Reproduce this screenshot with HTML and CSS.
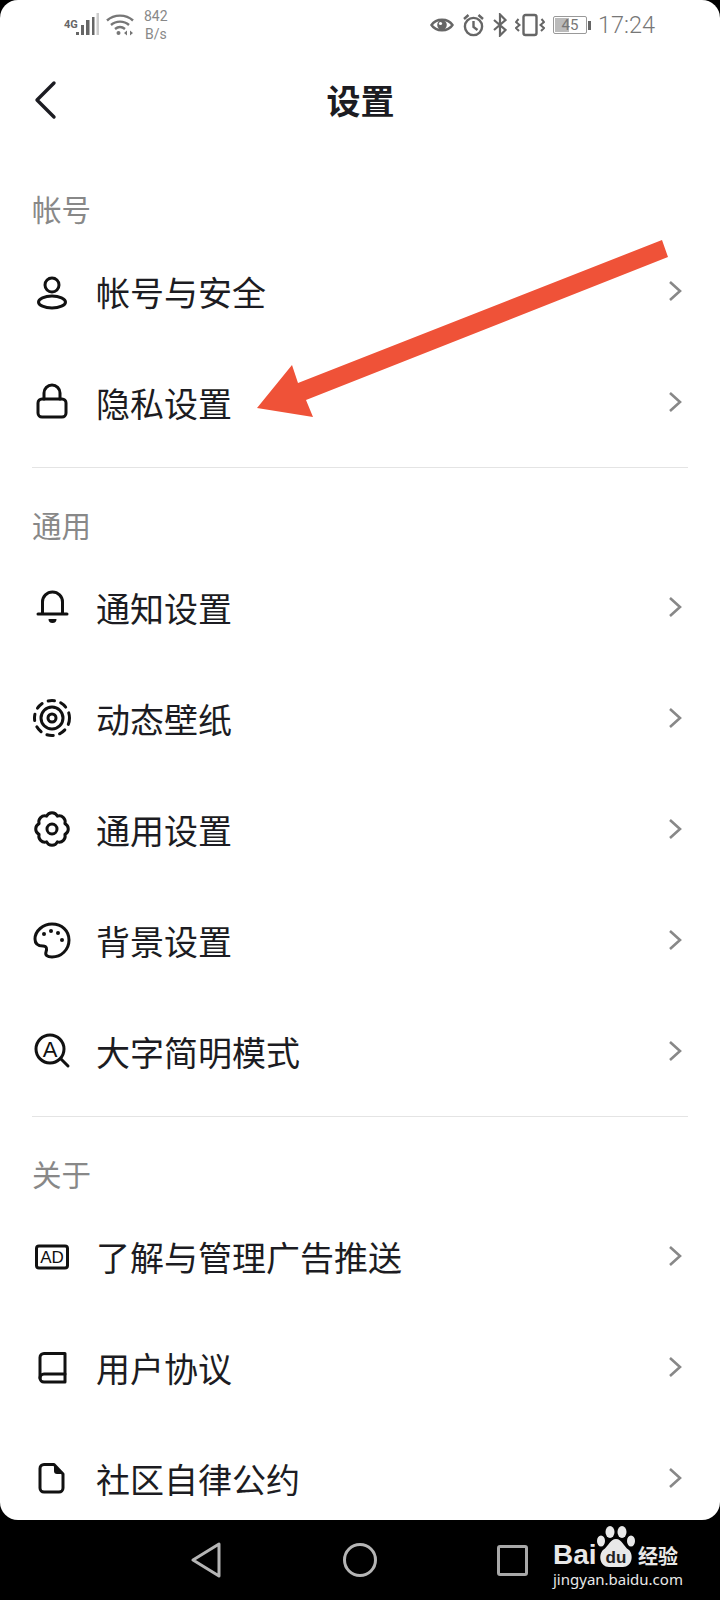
FILE: index.html
```html
<!DOCTYPE html>
<html lang="zh-CN">
<head>
  <meta charset="UTF-8">
  <meta name="viewport" content="width=device-width, initial-scale=1.0">
  <title>设置</title>
  <link rel="stylesheet" href="styles.css">
</head>
<body>
  <div class="screen">
    <div class="status-bar">
      <div class="status-group">
        <span class="net-type">4G</span>
        <svg class="signal" width="24" height="24" viewBox="0 0 24 24">
          <rect x="0" y="19" width="3" height="3"/>
          <rect x="5" y="12" width="3" height="10"/>
          <rect x="10" y="7" width="3.5" height="15"/>
          <rect x="16" y="4" width="2.5" height="18"/>
          <rect x="20.5" y="0" width="2.5" height="22" fill="#ccc"/>
        </svg>
        <svg class="wifi" width="28" height="24" viewBox="0 0 28 24" fill="none" stroke="#777" stroke-width="2.4">
          <path d="M1 7.5C8 1 20 1 27 7.5"/>
          <path d="M5 12C10 7.5 18 7.5 23 12"/>
          <path d="M9 16c3-2.4 7-2.4 10 0"/>
          <circle cx="12.5" cy="20" r="2" fill="#777" stroke="none"/>
          <path d="M21 17.5l-3 2.5 3 2.5zM24 17.5l3 2.5-3 2.5z" fill="#777" stroke="none"/>
        </svg>
        <div class="net-speed"><span>842</span><span>B/s</span></div>
      </div>
      <div class="status-group status-right">
        <svg width="24" height="20" viewBox="0 0 24 20" fill="none" stroke="#666" stroke-width="2.4">
          <path d="M1.5 10C6 3 18 3 22.5 10C18 17 6 17 1.5 10Z"/>
          <circle cx="12" cy="10" r="4.8" fill="#666" stroke="none"/>
          <circle cx="10.5" cy="8.5" r="1.6" fill="#fff" stroke="none"/>
        </svg>
        <svg width="23" height="24" viewBox="0 0 22 24" fill="none" stroke="#666" stroke-width="2.4">
          <circle cx="11" cy="13.5" r="8.6"/>
          <path d="M11 8v6l4 3M1.5 6L6 2M20.5 6L16 2"/>
        </svg>
        <svg width="14" height="24" viewBox="0 0 14 24" fill="none" stroke="#666" stroke-width="2.2">
          <path d="M1 7L12.5 17L7 22.5V1.5L12.5 7L1 17"/>
        </svg>
        <svg width="30" height="24" viewBox="0 0 30 24" fill="none" stroke="#666" stroke-width="2">
          <rect x="8.5" y="2" width="13" height="20" rx="2" stroke-width="2.4"/>
          <path d="M3.5 6L1 9l3.5 3L1 15l3 3M26.5 6L29 9l-3.5 3L29 15l-3 3"/>
        </svg>
        <div class="battery">
          <div class="battery-body"><div class="battery-fill"></div><span>45</span></div>
          <div class="battery-cap"></div>
        </div>
        <span class="clock">17:24</span>
      </div>
    </div>

    <div class="header">
      <svg class="back" width="24" height="40" viewBox="0 0 24 40" fill="none" stroke="#1c1c22" stroke-width="3.4" stroke-linecap="round" stroke-linejoin="round">
        <path d="M20 3L3 20L20 37"/>
      </svg>
      <h1>设置</h1>
    </div>

    <div class="section">
      <div class="section-title">帐号</div>
      <div class="row">
        <svg class="icon" viewBox="0 0 44 44"><circle cx="22" cy="14" r="7"/><ellipse cx="22" cy="31" rx="13.5" ry="6"/></svg>
        <span class="label">帐号与安全</span>
        <svg class="chevron" viewBox="0 0 14 22"><path d="M2 2L12 11L2 20"/></svg>
      </div>
      <div class="row">
        <svg class="icon" viewBox="0 0 44 44"><rect x="8" y="17" width="28" height="18" rx="4"/><path d="M14 17v-6a8 8 0 0 1 16 0v6"/></svg>
        <span class="label">隐私设置</span>
        <svg class="chevron" viewBox="0 0 14 22"><path d="M2 2L12 11L2 20"/></svg>
      </div>
    </div>
    <div class="divider"></div>

    <div class="section">
      <div class="section-title">通用</div>
      <div class="row">
        <svg class="icon" viewBox="0 0 44 44"><path d="M8 27h29M12.5 27V15a10 10 0 0 1 20 0v12"/><path class="solid" d="M18.5 32h8a4 4 0 0 1-8 0z"/></svg>
        <span class="label">通知设置</span>
        <svg class="chevron" viewBox="0 0 14 22"><path d="M2 2L12 11L2 20"/></svg>
      </div>
      <div class="row">
        <svg class="icon" viewBox="0 0 44 44"><circle class="dashed" cx="22" cy="20" r="17.5"/><circle cx="22" cy="20" r="11"/><circle cx="22" cy="20" r="4"/></svg>
        <span class="label">动态壁纸</span>
        <svg class="chevron" viewBox="0 0 14 22"><path d="M2 2L12 11L2 20"/></svg>
      </div>
      <div class="row">
        <svg class="icon" viewBox="0 0 44 44"><path d="M34.9 14.6A6 6 0 0 1 34.9 25.4A6 6 0 0 1 27.4 32.9A6 6 0 0 1 16.6 32.9A6 6 0 0 1 9.1 25.4A6 6 0 0 1 9.1 14.6A6 6 0 0 1 16.6 7.1A6 6 0 0 1 27.4 7.1A6 6 0 0 1 34.9 14.6Z"/><circle cx="22" cy="20" r="5"/></svg>
        <span class="label">通用设置</span>
        <svg class="chevron" viewBox="0 0 14 22"><path d="M2 2L12 11L2 20"/></svg>
      </div>
      <div class="row">
        <svg class="icon" viewBox="0 0 44 44"><path d="M5 19C5 11 13 4 22 4C32 4 39 11 39 20C39 30 31 37 22 37C17 37 15 35 16 32C17 29 17 26 13 26C8 26 5 24 5 19Z"/><circle class="solid" cx="14" cy="14" r="2"/><circle class="solid" cx="21" cy="11" r="2"/><circle class="solid" cx="28" cy="13" r="2"/><circle class="solid" cx="32" cy="20" r="2"/></svg>
        <span class="label">背景设置</span>
        <svg class="chevron" viewBox="0 0 14 22"><path d="M2 2L12 11L2 20"/></svg>
      </div>
      <div class="row">
        <svg class="icon" viewBox="0 0 44 44"><circle cx="20" cy="18" r="14"/><path d="M31 28l7 7"/><text class="icon-text" x="20" y="26" font-size="22">A</text></svg>
        <span class="label">大字简明模式</span>
        <svg class="chevron" viewBox="0 0 14 22"><path d="M2 2L12 11L2 20"/></svg>
      </div>
    </div>
    <div class="divider"></div>

    <div class="section">
      <div class="section-title">关于</div>
      <div class="row">
        <svg class="icon" viewBox="0 0 44 44"><rect x="6.5" y="10" width="31" height="22" rx="2.5"/><text class="icon-text" x="22" y="27" font-size="17">AD</text></svg>
        <span class="label">了解与管理广告推送</span>
        <svg class="chevron" viewBox="0 0 14 22"><path d="M2 2L12 11L2 20"/></svg>
      </div>
      <div class="row">
        <svg class="icon" viewBox="0 0 44 44"><path d="M14 6.5H35V35H14a4 4 0 0 1-4-4V10.5a4 4 0 0 1 4-4z"/><path d="M10 31a4 4 0 0 1 4-4H35"/></svg>
        <span class="label">用户协议</span>
        <svg class="chevron" viewBox="0 0 14 22"><path d="M2 2L12 11L2 20"/></svg>
      </div>
      <div class="row">
        <svg class="icon" viewBox="0 0 44 44"><path d="M14 6.5H24L33 16V30a4 4 0 0 1-4 4H14a4 4 0 0 1-4-4V10.5a4 4 0 0 1 4-4z"/><path class="solid" d="M24 7V13a3 3 0 0 0 3 3H33z"/></svg>
        <span class="label">社区自律公约</span>
        <svg class="chevron" viewBox="0 0 14 22"><path d="M2 2L12 11L2 20"/></svg>
      </div>
    </div>

    <svg class="arrow" width="720" height="1520" viewBox="0 0 720 1520">
      <polygon points="662,240 668,257 306,400 313,417 257,408 292,365 298,383" fill="#ef5238"/>
    </svg>
  </div>

  <div class="nav-bar">
    <svg class="nav-back" width="30" height="36" viewBox="0 0 30 36" fill="none" stroke="#b5b5b5" stroke-width="3" stroke-linejoin="round">
      <path d="M28 2V34L2 18Z"/>
    </svg>
    <div class="nav-home"></div>
    <div class="nav-recent"></div>
    <div class="logo">
      <div class="logo-top">
        <span class="logo-bai">Bai</span>
        <svg class="logo-paw" width="40" height="44" viewBox="0 0 40 44">
          <ellipse cx="14" cy="7" rx="4.5" ry="6"/>
          <ellipse cx="26" cy="7" rx="4.5" ry="6"/>
          <ellipse cx="5" cy="16" rx="4" ry="5.5"/>
          <ellipse cx="35" cy="16" rx="4" ry="5.5"/>
          <path d="M20 14C26 14 27 21 33 25C38 30 36 42 27 42H13C4 42 2 30 7 25C13 21 14 14 20 14Z"/>
          <text x="20" y="38" font-size="17" text-anchor="middle">du</text>
        </svg>
        <span class="logo-cn">经验</span>
      </div>
      <div class="logo-url">jingyan.baidu.com</div>
    </div>
  </div>
</body>
</html>
```

FILE: styles.css
```css
* {
  box-sizing: border-box;
}
body {
  margin: 0;
  width: 720px;
  height: 1600px;
  background-color: #000;
  font-family: "Noto Sans CJK SC", "Noto Sans", sans-serif;
  overflow: hidden;
}
.screen {
  position: relative;
  height: 1520px;
  background-color: #fff;
  border-radius: 18px;
  overflow: hidden;
}
.status-bar {
  height: 50px;
  padding: 0 65px 0 64px;
  display: flex;
  justify-content: space-between;
  align-items: center;
  color: #888;
}
.status-group {
  display: flex;
  align-items: center;
}
.status-right {
  gap: 8px;
}
.net-type {
  font-family: "Roboto", sans-serif;
  font-size: 11px;
  font-weight: 700;
  color: #666;
  align-self: flex-start;
  margin-top: 11px;
  width: 12px;
}
.signal {
  fill: #666;
}
.wifi {
  margin-left: 6px;
}
.net-speed {
  margin-left: 10px;
  display: flex;
  flex-direction: column;
  align-items: center;
  font-family: "Roboto", sans-serif;
  font-size: 14px;
  line-height: 18px;
  color: #888;
}
.battery {
  display: flex;
  align-items: center;
}
.battery-body {
  position: relative;
  width: 34px;
  height: 18px;
  border: 1.5px solid #999;
  border-radius: 2px;
  display: flex;
  justify-content: center;
  align-items: center;
  font-family: "Roboto", sans-serif;
  font-size: 15px;
  color: #777;
}
.battery-body span {
  position: relative;
}
.battery-fill {
  position: absolute;
  left: 1px;
  top: 1px;
  bottom: 1px;
  width: 45%;
  background-color: #bbb;
}
.battery-cap {
  width: 3px;
  height: 9px;
  margin-left: 1px;
  background-color: #666;
}
.clock {
  font-family: "Roboto", sans-serif;
  font-size: 23.5px;
  font-weight: 300;
  color: #777;
  margin-left: -1px;
}
.header {
  height: 102px;
  position: relative;
  display: flex;
  justify-content: center;
  align-items: center;
}
.back {
  position: absolute;
  left: 34px;
  top: 30px;
}
h1 {
  margin: 0 0 4px 1px;
  font-size: 34px;
  font-weight: 700;
  color: #1c1c22;
}
.section {
  padding-top: 30px;
}
.section-title {
  height: 56px;
  padding: 0 0 4px 32px;
  display: flex;
  align-items: center;
  font-size: 29.5px;
  color: #888;
}
.row {
  height: 111px;
  padding: 0 38px 0 30px;
  display: flex;
  align-items: center;
}
.icon {
  width: 44px;
  height: 44px;
  margin-bottom: 2px;
  flex-shrink: 0;
  fill: none;
  stroke: #111;
  stroke-width: 3;
  stroke-linecap: round;
  stroke-linejoin: round;
}
.icon .solid {
  fill: #111;
  stroke: none;
}
.icon .dashed {
  stroke-dasharray: 6.5 6.5;
}
.icon-text {
  font-family: "Liberation Sans", sans-serif;
  text-anchor: middle;
  fill: #111;
  stroke: none;
}
.label {
  margin: 0 0 4px 22px;
  flex: 1;
  font-size: 34px;
  color: #1c1c22;
}
.chevron {
  width: 14px;
  height: 22px;
  margin-bottom: 6px;
  fill: none;
  stroke: #888;
  stroke-width: 2.6;
}
.divider {
  height: 1px;
  margin: 7px 32px 0;
  background-color: #e4e4e4;
}
.arrow {
  position: absolute;
  left: 0;
  top: 0;
}
.nav-bar {
  height: 80px;
  padding-left: 191px;
  display: flex;
  align-items: center;
}
.nav-home {
  width: 34px;
  height: 34px;
  margin-left: 122px;
  border: 3px solid #b5b5b5;
  border-radius: 50%;
}
.nav-recent {
  width: 31px;
  height: 31px;
  margin-left: 120px;
  border: 3px solid #a8a8a8;
  border-radius: 3px;
}
.logo {
  margin: -6px 0 0 25px;
  color: #e8e8e8;
}
.logo-top {
  display: flex;
  align-items: flex-end;
  height: 44px;
}
.logo-bai {
  font-family: "Liberation Sans", sans-serif;
  font-size: 28px;
  font-weight: 700;
  line-height: 28px;
  width: 43px;
}
.logo-paw {
  fill: #e8e8e8;
}
.logo-paw text {
  font-family: "Liberation Sans", sans-serif;
  font-weight: 700;
  fill: #222;
}
.logo-cn {
  font-size: 20px;
  font-weight: 700;
  line-height: 26px;
  margin-left: 2px;
}
.logo-url {
  font-family: "Noto Sans", sans-serif;
  font-size: 15px;
  line-height: 20px;
}
```
